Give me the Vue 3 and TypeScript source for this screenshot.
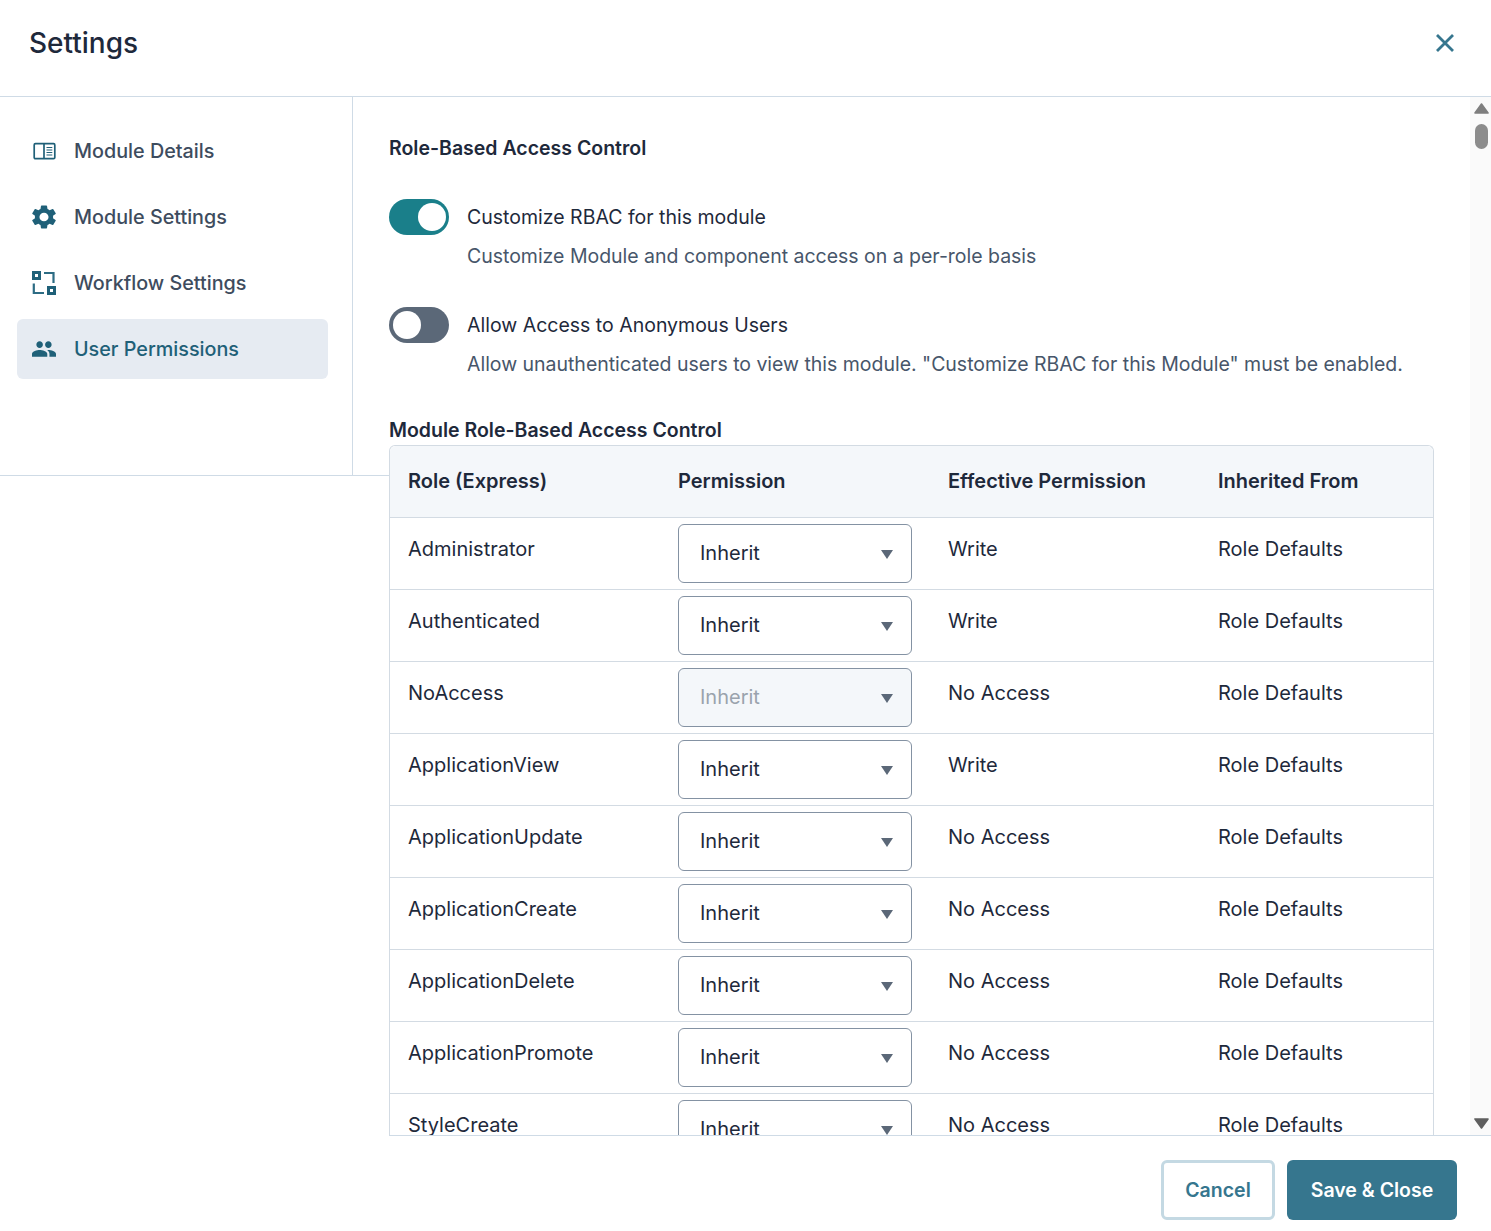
<script setup lang="ts">
interface Row { role: string; effective: string; disabled?: boolean }
const rows: Row[] = [
  { role: 'Administrator', effective: 'Write' },
  { role: 'Authenticated', effective: 'Write' },
  { role: 'NoAccess', effective: 'No Access', disabled: true },
  { role: 'ApplicationView', effective: 'Write' },
  { role: 'ApplicationUpdate', effective: 'No Access' },
  { role: 'ApplicationCreate', effective: 'No Access' },
  { role: 'ApplicationDelete', effective: 'No Access' },
  { role: 'ApplicationPromote', effective: 'No Access' },
  { role: 'StyleCreate', effective: 'No Access' },
]
</script>

<template>
  <div class="page">
    <header class="top">
      <h1 class="title">Settings</h1>
      <svg class="close" width="24" height="24" viewBox="0 0 24 24" aria-hidden="true">
        <path d="M4 4 L20 20 M20 4 L4 20" fill="none" stroke="#36768e" stroke-width="2.8" />
      </svg>
    </header>

    <div class="body">
      <aside class="left">
        <nav class="nav">
          <div class="item">
            <svg class="icon" viewBox="0 0 24 24" aria-hidden="true">
              <rect x="2.2" y="4.7" width="20.6" height="15" rx="1.2" fill="none" stroke="#1f6078" stroke-width="1.7" />
              <path d="M12 4.7v15" stroke="#1f6078" stroke-width="1.7" />
              <path d="M14.5 8.5h5.8M14.5 11h5.8M14.5 13.5h5.8M14.5 16h5.8" stroke="#1f6078" stroke-width="1.1" />
            </svg>
            <span>Module Details</span>
          </div>
          <div class="item">
            <svg class="icon" viewBox="2.5 2 19 20" preserveAspectRatio="none" aria-hidden="true">
              <path fill="#1f6078" d="M19.14 12.94c.04-.3.06-.61.06-.94 0-.32-.02-.64-.07-.94l2.03-1.58a.49.49 0 0 0 .12-.61l-1.92-3.32a.488.488 0 0 0-.59-.22l-2.39.96c-.5-.38-1.03-.7-1.62-.94l-.36-2.54a.484.484 0 0 0-.48-.41h-3.84c-.24 0-.43.17-.47.41l-.36 2.54c-.59.24-1.13.57-1.62.94l-2.39-.96c-.22-.08-.47 0-.59.22L2.74 8.87c-.12.21-.08.47.12.61l2.03 1.58c-.05.3-.09.63-.09.94s.02.64.07.94l-2.03 1.58a.49.49 0 0 0-.12.61l1.92 3.32c.12.22.37.29.59.22l2.39-.96c.5.38 1.03.7 1.62.94l.36 2.54c.05.24.24.41.48.41h3.84c.24 0 .44-.17.47-.41l.36-2.54c.59-.24 1.13-.56 1.62-.94l2.39.96c.22.08.47 0 .59-.22l1.92-3.32c.12-.22.07-.47-.12-.61l-2.01-1.58zM12 15.6c-1.98 0-3.6-1.62-3.6-3.6s1.62-3.6 3.6-3.6 3.6 1.62 3.6 3.6-1.62 3.6-3.6 3.6z" />
            </svg>
            <span>Module Settings</span>
          </div>
          <div class="item">
            <svg class="icon" viewBox="0 0 24 24" aria-hidden="true">
              <path fill="#1f6078" fill-rule="evenodd" d="M0 0h9v9H0zM3 3v3h3V3z" />
              <path fill="#1f6078" fill-rule="evenodd" d="M15 15h9v9h-9zM18 18v3h3v-3z" />
              <path fill="none" stroke="#2d6c84" stroke-width="2.2" d="M12 2h9.5v10M1.8 12.5v9.5H12" />
            </svg>
            <span>Workflow Settings</span>
          </div>
          <div class="item active">
            <svg class="icon" viewBox="1 1 22 22" aria-hidden="true">
              <path fill="#1f6078" d="M16 11c1.66 0 2.99-1.34 2.99-3S17.66 5 16 5c-1.66 0-3 1.34-3 3s1.34 3 3 3zm-8 0c1.66 0 2.99-1.34 2.99-3S9.66 5 8 5C6.34 5 5 6.34 5 8s1.34 3 3 3zm0 2c-2.33 0-7 1.17-7 3.5V19h14v-2.5c0-2.33-4.67-3.5-7-3.5zm8 0c-.29 0-.62.02-.97.05 1.16.84 1.97 1.97 1.97 3.45V19h6v-2.5c0-2.33-4.67-3.5-7-3.5z" />
            </svg>
            <span>User Permissions</span>
          </div>
        </nav>
      </aside>

      <main class="main">
        <h2 class="section first">Role-Based Access Control</h2>

        <div class="opt">
          <span class="toggle on"><i class="knob" /></span>
          <div class="opt-text">
            <div class="opt-label">Customize RBAC for this module</div>
            <div class="opt-desc">Customize Module and component access on a per-role basis</div>
          </div>
        </div>
        <div class="opt second">
          <span class="toggle"><i class="knob" /></span>
          <div class="opt-text">
            <div class="opt-label">Allow Access to Anonymous Users</div>
            <div class="opt-desc">Allow unauthenticated users to view this module. "Customize RBAC for this Module" must be enabled.</div>
          </div>
        </div>

        <h2 class="section module">Module Role-Based Access Control</h2>

        <div class="table">
          <div class="tr head">
            <div class="th">Role (Express)</div>
            <div class="th">Permission</div>
            <div class="th">Effective Permission</div>
            <div class="th">Inherited From</div>
          </div>
          <div v-for="r in rows" :key="r.role" class="tr">
            <div class="td">{{ r.role }}</div>
            <div class="td sel-cell">
              <div class="select" :class="{ disabled: r.disabled }">
                <span>Inherit</span>
                <i class="caret" />
              </div>
            </div>
            <div class="td">{{ r.effective }}</div>
            <div class="td">Role Defaults</div>
          </div>
        </div>
      </main>

      <div class="scrollbar" aria-hidden="true">
        <svg class="arrow-svg up" width="15" height="11" viewBox="0 0 15 11"><path d="M7.5 1 L14 10 H1 Z" fill="#7f7f7f" stroke="#7f7f7f" stroke-width="1.6" stroke-linejoin="round" /></svg>
        <i class="thumb" />
        <i class="spacer" />
        <svg class="arrow-svg down" width="15" height="11" viewBox="0 0 15 11"><path d="M1 1 H14 L7.5 10 Z" fill="#5f5f5f" stroke="#5f5f5f" stroke-width="1.6" stroke-linejoin="round" /></svg>
      </div>
    </div>

    <footer class="foot">
      <button class="btn cancel" type="button">Cancel</button>
      <button class="btn save" type="button">Save &amp; Close</button>
    </footer>
  </div>
</template>

<style scoped>
.page {
  width: 1491px;
  height: 1231px;
  display: flex;
  flex-direction: column;
  background: #fff;
  font-family: Inter, "Liberation Sans", sans-serif;
  font-size: 20px;
  color: #1e293b;
  overflow: hidden;
}
.top {
  height: 97px;
  flex: none;
  display: flex;
  align-items: center;
  justify-content: space-between;
  padding: 0 34px 11px 29px;
  border-bottom: 1px solid #cfdbe6;
  box-sizing: border-box;
}
.title {
  margin: 0;
  font-size: 28px;
  font-weight: 500;
  color: #1e293b;
}
.close { display: block; }
.body {
  flex: 1;
  min-height: 0;
  display: flex;
}
.left {
  flex: none;
  width: 389px;
  height: 379px;
  box-sizing: border-box;
  border-bottom: 1px solid #cfdbe6;
}
.nav {
  width: 353px;
  height: 378px;
  box-sizing: border-box;
  padding: 24px 24px 0 17px;
  border-right: 1px solid #cfdbe6;
  display: flex;
  flex-direction: column;
  gap: 6px;
}
.item {
  height: 60px;
  display: flex;
  align-items: center;
  gap: 18px;
  padding-left: 15px;
  border-radius: 6px;
  font-size: 19.75px;
  font-weight: 500;
  color: #3e4c5e;
}
.item.active {
  background: #e6ebf2;
  color: #1f6078;
}
.icon {
  width: 24px;
  height: 24px;
  flex: none;
  display: block;
}
.main {
  width: 1045px;
  flex: none;
  overflow: hidden;
}
.section {
  margin: 0;
  font-size: 19.5px;
  font-weight: 600;
  line-height: 24px;
  color: #1e293b;
}
.section.first { margin-top: 39px; }
.section.module { margin-top: 42px; margin-bottom: 3px; }
.opt {
  display: flex;
  gap: 18px;
  margin-top: 39px;
}
.opt.second { margin-top: 39px; }
.toggle {
  width: 60px;
  height: 36px;
  border-radius: 18px;
  background: #5b6878;
  display: flex;
  align-items: center;
  padding: 0 4px;
  box-sizing: border-box;
  flex: none;
}
.toggle.on {
  background: #1a7f8a;
  justify-content: flex-end;
  padding-right: 3px;
}
.knob {
  width: 28px;
  height: 28px;
  border-radius: 50%;
  background: #fff;
}
.opt-label {
  height: 36px;
  line-height: 36px;
  font-size: 19.5px;
  color: #1e293b;
}
.opt-desc {
  margin-top: 9px;
  line-height: 24px;
  font-size: 19.5px;
  letter-spacing: -0.02px;
  color: #47566a;
}
.table {
  border: 1px solid #d3dbe3;
  border-radius: 6px 6px 0 0;
  border-bottom: 0;
}
.tr {
  display: grid;
  grid-template-columns: 270px 270px 270px 1fr;
  height: 72px;
  box-sizing: border-box;
  border-top: 1px solid #d3dbe3;
}
.tr.head {
  height: 71px;
  border-top: 0;
  background: #f4f7fa;
  border-radius: 6px 6px 0 0;
  align-items: center;
  padding-bottom: 2px;
}
.th {
  padding-left: 18px;
  font-weight: 600;
  color: #1e293b;
}
.td {
  padding: 19px 0 0 18px;
  line-height: 24px;
}
.sel-cell { padding-top: 6px; }
.select {
  width: 234px;
  height: 59px;
  box-sizing: border-box;
  border: 1px solid #8492a3;
  border-radius: 6px;
  background: #fff;
  display: flex;
  align-items: center;
  justify-content: space-between;
  padding: 0 18px 0 21px;
}
.select span { color: #1e293b; position: relative; top: -1px; }
.select.disabled { background: #f4f7fa; }
.select.disabled span { color: #9aa3ad; }
.caret {
  width: 0;
  height: 0;
  border-left: 6px solid transparent;
  border-right: 6px solid transparent;
  border-top: 9px solid #5b6878;
  margin-top: 2px;
}
.scrollbar {
  flex: none;
  width: 21px;
  margin-left: 36px;
  padding-left: 2px;
  box-sizing: border-box;
  background: #fafafa;
  display: flex;
  flex-direction: column;
  align-items: center;
}
.arrow-svg { display: block; flex: none; }
.arrow-svg.up { margin-top: 6px; }
.arrow-svg.down { margin-bottom: 6px; }
.thumb {
  width: 13px;
  height: 25px;
  margin-top: 10px;
  border-radius: 7px;
  background: #8c8c8c;
}
.spacer { flex: 1; }
.foot {
  flex: none;
  height: 96px;
  box-sizing: border-box;
  margin-left: 389px;
  border-top: 1px solid #cfdbe6;
  display: flex;
  justify-content: flex-end;
  align-items: flex-start;
  gap: 12px;
  padding: 24px 34px 0 0;
}
.btn {
  height: 60px;
  border-radius: 6px;
  font-family: Inter, "Liberation Sans", sans-serif;
  font-size: 19.5px;
  font-weight: 600;
  box-sizing: border-box;
}
.cancel {
  width: 114px;
  background: #fff;
  color: #36768e;
  border: 3px solid #c4d9e3;
}
.save {
  width: 170px;
  background: #36768e;
  color: #fff;
  border: 0;
}
</style>
